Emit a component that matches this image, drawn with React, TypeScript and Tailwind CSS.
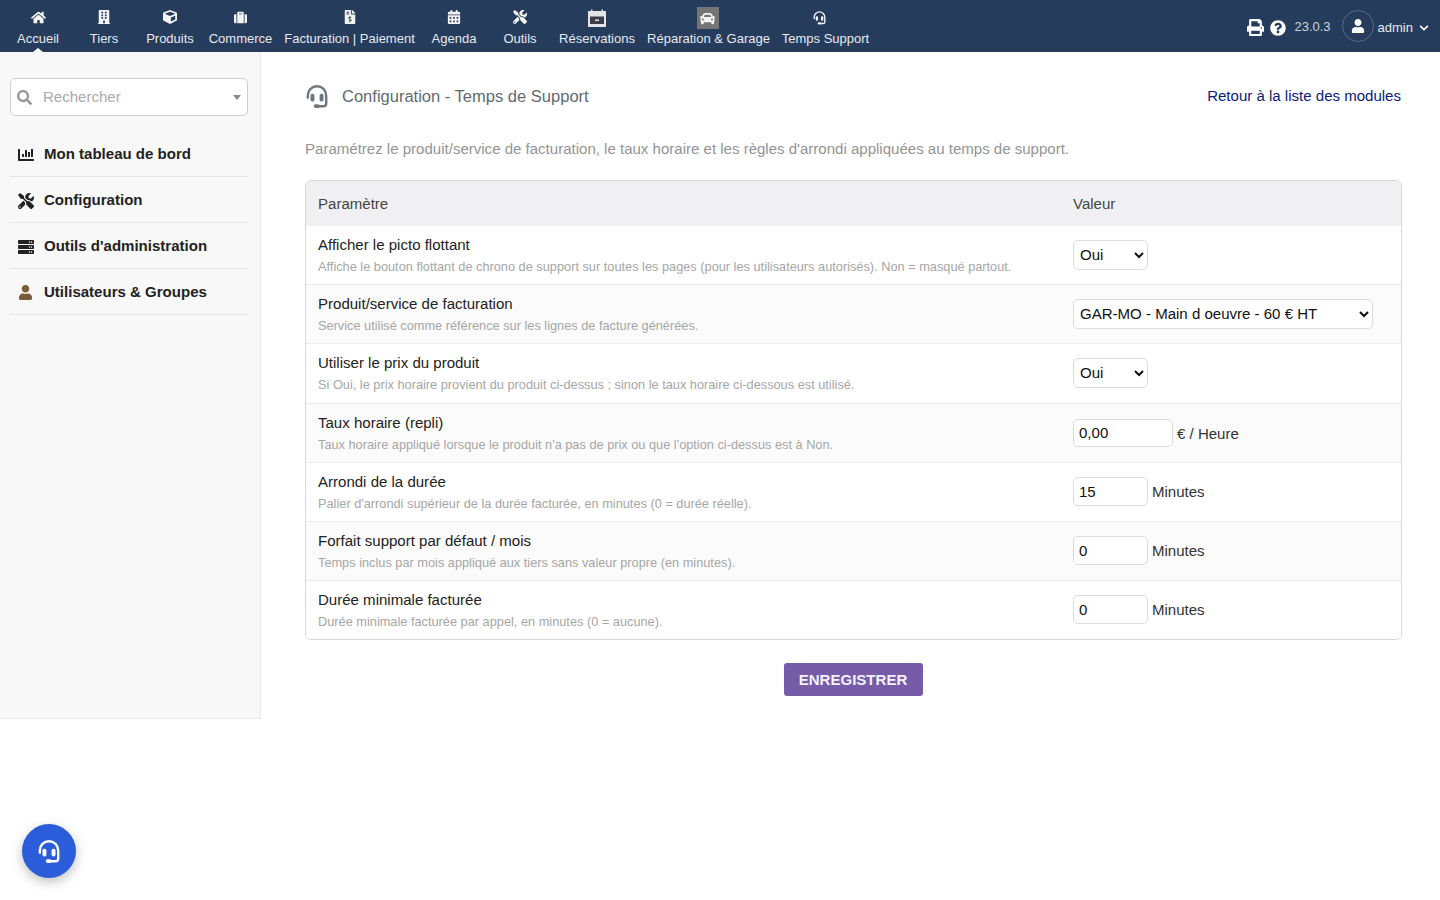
import React from "react";
import { FaHome, FaBuilding, FaCube, FaSuitcase, FaFileInvoiceDollar, FaCalendarAlt, FaTools, FaPrint, FaQuestionCircle, FaUser, FaChevronDown, FaSearch, FaChartBar, FaServer, FaCar } from "react-icons/fa";

function Headset({ size, className }: { size: number; className?: string }) {
  return (
    <svg width={size} height={size} viewBox="0 0 24 24" fill="none" className={className}>
      <path d="M3.5 13.5 V11.5 a8.5 8.5 0 0 1 17 0 V19 a2.5 2.5 0 0 1 -2.5 2.5 H13" stroke="currentColor" strokeWidth="2.2" strokeLinecap="round" />
      <rect x="6" y="10" width="3.6" height="7" rx="1.6" fill="currentColor" />
      <rect x="14.4" y="10" width="3.6" height="7" rx="1.6" fill="currentColor" />
      <rect x="9" y="19.6" width="5.5" height="3.4" rx="1.7" fill="currentColor" />
    </svg>
  );
}

function Resa() {
  return (
    <svg width="20" height="18" viewBox="0 0 20 18" className="mt-[2px]">
      <rect x="1" y="2" width="18" height="16" fill="#e4e4e4" />
      <rect x="4" y="0.5" width="1.5" height="1.5" fill="#e4e4e4" />
      <rect x="14.5" y="0.5" width="1.5" height="1.5" fill="#e4e4e4" />
      <rect x="3" y="7.5" width="14" height="7.5" fill="#3a3f4a" />
      <rect x="8" y="10.5" width="4" height="1.5" fill="#e4e4e4" />
    </svg>
  );
}

const nav: { label: string; icon: React.ReactNode; w: string }[] = [
  { label: "Accueil", icon: <FaHome size={15} />, w: "w-[66px]" },
  { label: "Tiers", icon: <FaBuilding size={14} />, w: "w-[66px]" },
  { label: "Produits", icon: <FaCube size={14} />, w: "w-[66px]" },
  { label: "Commerce", icon: <FaSuitcase size={13} />, w: "w-[75px]" },
  { label: "Facturation | Paiement", icon: <FaFileInvoiceDollar size={14} />, w: "w-[143px]" },
  { label: "Agenda", icon: <FaCalendarAlt size={14} />, w: "w-[66px]" },
  { label: "Outils", icon: <FaTools size={14} />, w: "w-[66px]" },
  { label: "Réservations", icon: <Resa />, w: "w-[88px]" },
  {
    label: "Réparation & Garage",
    icon: (
      <span className="mr-[2px] mt-[2px] flex h-[22px] w-[22px] items-center justify-center bg-[#757575]">
        <FaCar size={15} />
      </span>
    ),
    w: "w-[135px]",
  },
  { label: "Temps Support", icon: <Headset size={15} className="mr-[13px]" />, w: "w-[99px]" },
];

const side = [
  { label: "Mon tableau de bord", icon: <FaChartBar size={16} className="text-[#222]" /> },
  { label: "Configuration", icon: <FaTools size={16} className="text-[#222]" /> },
  { label: "Outils d'administration", icon: <FaServer size={16} className="text-[#222]" /> },
  { label: "Utilisateurs & Groupes", icon: <FaUser size={15} className="text-[#7a5c3a]" /> },
];

function Sel({ v, w }: { v: string; w: string }) {
  return (
    <select
      defaultValue={v}
      className={`${w} h-[30px] rounded-[5px] border border-[#dcdcdc] bg-white pb-[2px] pl-[2px] text-[15.04px] text-[#111]`}
    >
      <option>{v}</option>
    </select>
  );
}

function Inp({ v, w, unit, cls, ucls }: { v: string; w: string; unit: string; cls: string; ucls: string }) {
  return (
    <div className="flex items-center gap-[4px]">
      <input
        readOnly
        value={v}
        className={`${w} ${cls} rounded-[5px] border border-[#dcdcdc] bg-white px-[5px] text-[15.04px] text-[#111]`}
      />
      <span className={`${ucls} text-[15.04px] text-[#333]`}>{unit}</span>
    </div>
  );
}

const num = { cls: "h-[29px] mb-[1px]", ucls: "" };

const rows: { t: string; d: string; c: React.ReactNode; h: string; bg?: string }[] = [
  { t: "Afficher le picto flottant", d: "Affiche le bouton flottant de chrono de support sur toutes les pages (pour les utilisateurs autorisés). Non = masqué partout.", c: <Sel v="Oui" w="w-[75px]" />, h: "h-[59px]" },
  { t: "Produit/service de facturation", d: "Service utilisé comme référence sur les lignes de facture générées.", c: <Sel v="GAR-MO - Main d oeuvre - 60 € HT" w="w-[300px]" />, h: "h-[59px]", bg: "bg-[#fbfbfb]" },
  { t: "Utiliser le prix du produit", d: "Si Oui, le prix horaire provient du produit ci-dessus ; sinon le taux horaire ci-dessous est utilisé.", c: <Sel v="Oui" w="w-[75px]" />, h: "h-[60px] pb-[1px]" },
  { t: "Taux horaire (repli)", d: "Taux horaire appliqué lorsque le produit n'a pas de prix ou que l'option ci-dessus est à Non.", c: <Inp v="0,00" w="w-[100px]" cls="h-[28px] pb-[2px]" ucls="pt-[3px]" unit="€ / Heure" />, h: "h-[59px]", bg: "bg-[#fbfbfb]" },
  { t: "Arrondi de la durée", d: "Palier d'arrondi supérieur de la durée facturée, en minutes (0 = durée réelle).", c: <Inp v="15" w="w-[75px]" {...num} unit="Minutes" />, h: "h-[59px]" },
  { t: "Forfait support par défaut / mois", d: "Temps inclus par mois appliqué aux tiers sans valeur propre (en minutes).", c: <Inp v="0" w="w-[75px]" {...num} unit="Minutes" />, h: "h-[59px]", bg: "bg-[#fbfbfb]" },
  { t: "Durée minimale facturée", d: "Durée minimale facturée par appel, en minutes (0 = aucune).", c: <Inp v="0" w="w-[75px]" {...num} unit="Minutes" />, h: "h-[58px]" },
];

export default function App() {
  return (
    <div className="relative min-h-[900px] bg-white font-['Liberation_Sans',Arial,sans-serif]">
      <header className="flex h-[52px] items-stretch bg-[#263c5c] pl-[5px] text-white">
        {nav.map((n, i) => (
          <div key={n.label} className={`${n.w} relative flex flex-col items-center`}>
            <div className="flex h-[34px] items-center justify-center text-[#f4f4f4]">{n.icon}</div>
            <div className="whitespace-nowrap text-[13px] leading-[10px] text-[#e6e9ee]">{n.label}</div>
            {i === 0 && (
              <span className="absolute bottom-0 left-1/2 h-0 w-0 -translate-x-1/2 border-x-[5px] border-b-[4px] border-x-transparent border-b-white" />
            )}
          </div>
        ))}
        <div className="ml-auto flex items-center pr-[11px] pt-[3px]">
          <FaPrint size={17} className="text-white" />
          <FaQuestionCircle size={16} className="ml-[6px] text-white" />
          <span className="ml-[8px] pb-[2px] text-[13px] text-[#cfd4db]">23.0.3</span>
          <span className="ml-[11px] flex h-[32px] w-[32px] items-center justify-center rounded-full border border-[#5a6b85] -mt-[3px]">
            <FaUser size={14} className="text-white" />
          </span>
          <span className="ml-[4px] text-[13px] text-[#e6e9ee]">admin</span>
          <FaChevronDown size={10} className="ml-[6px] text-white" />
        </div>
      </header>

      <div className="flex items-start">
        <aside className="h-[667px] w-[261px] shrink-0 border-b border-r border-[#e8e8e8] bg-[#f8f8f8] pl-[10px] pr-[12px] pt-[26px]">
          <div className="flex h-[38px] items-center rounded-[5px] border border-[#cfcfcf] bg-white pl-[6px] pr-[6px] pt-[1px]">
            <FaSearch size={15} className="text-[#999]" />
            <span className="ml-[11px] text-[15.04px] text-[#aaa]">Rechercher</span>
            <span className="ml-auto h-0 w-0 border-x-[4px] border-t-[5px] border-x-transparent border-t-[#888]" />
          </div>
          <div className="mt-[15px]">
            {side.map((s) => (
              <div key={s.label} className="flex h-[46px] items-center border-b border-[#e6e6e6] pl-[8px] pt-[2px]">
                <span className="flex w-[26px] items-center">{s.icon}</span>
                <span className="text-[15.04px] font-bold text-[#222]">{s.label}</span>
              </div>
            ))}
          </div>
        </aside>

        <main className="w-[1179px] pl-[44px] pr-[38px]">
          <div className="mt-[31px] flex h-[26px] items-center">
            <Headset size={26} className="-ml-[1px] text-[#6b7880]" />
            <span className="ml-[12px] pt-[2px] text-[16.53px] text-[#5f6b73]">Configuration - Temps de Support</span>
            <span className="ml-auto pr-[1px] text-[15.04px] text-[#0a1c7a]">Retour à la liste des modules</span>
          </div>
          <p className="mt-[31px] text-[15.04px] leading-[18px] text-[#949494]">
            Paramétrez le produit/service de facturation, le taux horaire et les règles d'arrondi appliquées au temps de support.
          </p>
          <div className="mt-[22px] overflow-hidden rounded-[6px] border border-[#d8d8d8]">
            <div className="flex h-[45px] items-center bg-[#f0f0f2] pt-[2px] text-[15.04px] text-[#444]">
              <div className="w-[767px] pl-[12px]">Paramètre</div>
              <div>Valeur</div>
            </div>
            {rows.map((r, i) => (
              <div key={r.t} className={`flex items-center ${r.h} ${r.bg ?? "bg-white"} ${i < rows.length - 1 ? "border-b border-[#ececec]" : ""}`}>
                <div className="w-[767px] pl-[12px]">
                  <div className="text-[15.04px] leading-[18px] text-[#222]">{r.t}</div>
                  <div className="mt-[5px] text-[12.77px] leading-[16px] text-[#a6a6a6]">{r.d}</div>
                </div>
                <div>{r.c}</div>
              </div>
            ))}
          </div>
          <div className="mt-[23px] flex justify-center pr-[1px]">
            <button className="h-[33px] w-[139px] rounded-[3px] bg-[#755ba8] pt-[2px] text-[15.04px] font-bold text-[#f4f2f8]">ENREGISTRER</button>
          </div>
        </main>
      </div>

      <div className="absolute left-[22px] top-[824px] flex h-[54px] w-[54px] items-center justify-center rounded-full bg-[#2b5cd9] text-white shadow-[0_4px_12px_rgba(0,0,0,0.25)]">
        <Headset size={26} />
      </div>
    </div>
  );
}
